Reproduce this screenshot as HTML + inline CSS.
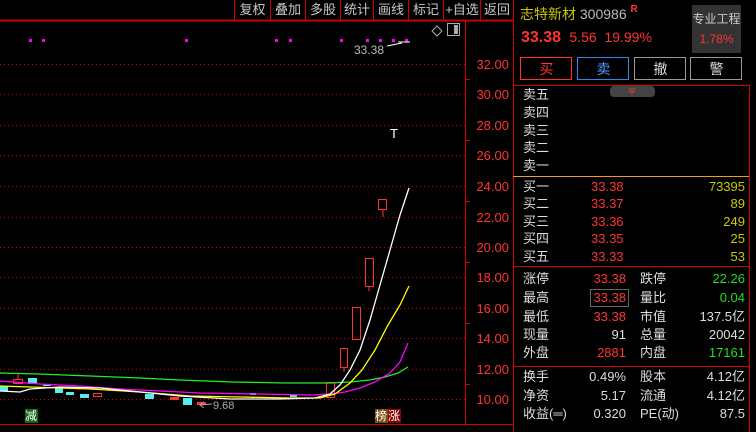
<!DOCTYPE html>
<html><head><meta charset="utf-8"><style>
body{margin:0;width:756px;height:432px;background:#000;overflow:hidden;font-family:"Liberation Sans","Noto Sans CJK SC",sans-serif;position:relative}
.a{position:absolute;white-space:nowrap}
.tb{position:absolute;top:0;height:20px;line-height:20px;font-size:13px;color:#c8c8c8;text-align:center}
.r{color:#ff3333}.y{color:#c8c800}.g{color:#22dd22}.w{color:#dddddd}.gr{color:#bbbbbb}
.row{position:absolute;left:523px;width:222px;height:18px;font-size:13px;line-height:18px;color:#dddddd}
.row span{position:absolute}
</style></head><body>
<svg class="a" style="left:0;top:0" width="756" height="432">
<g stroke="#cc0000" stroke-width="2"><line x1="0" y1="20.5" x2="513" y2="20.5"/></g>
<g stroke="#cc0000" stroke-width="1">
<line x1="234.5" y1="0" x2="234.5" y2="20"/><line x1="270.5" y1="0" x2="270.5" y2="20"/><line x1="305.5" y1="0" x2="305.5" y2="20"/><line x1="340.5" y1="0" x2="340.5" y2="20"/><line x1="373.5" y1="0" x2="373.5" y2="20"/><line x1="408.5" y1="0" x2="408.5" y2="20"/><line x1="443.5" y1="0" x2="443.5" y2="20"/><line x1="480.5" y1="0" x2="480.5" y2="20"/>
<line x1="465.5" y1="21" x2="465.5" y2="424"/>
<line x1="513.5" y1="0" x2="513.5" y2="432"/>
<line x1="749.5" y1="85" x2="749.5" y2="432"/>
<line x1="0" y1="424.5" x2="513" y2="424.5"/>
<line x1="513" y1="85.5" x2="749" y2="85.5"/>
<line x1="513" y1="266.5" x2="749" y2="266.5"/>
<line x1="513" y1="366.5" x2="749" y2="366.5"/>
</g>
<line x1="513" y1="176.5" x2="749" y2="176.5" stroke="#e8a020"/>
<g stroke="#cc0000" stroke-dasharray="1,3">
<line x1="0" y1="64.5" x2="465" y2="64.5"/><line x1="0" y1="94.5" x2="465" y2="94.5"/><line x1="0" y1="125.5" x2="465" y2="125.5"/><line x1="0" y1="155.5" x2="465" y2="155.5"/><line x1="0" y1="186.5" x2="465" y2="186.5"/><line x1="0" y1="217.5" x2="465" y2="217.5"/><line x1="0" y1="247.5" x2="465" y2="247.5"/><line x1="0" y1="277.5" x2="465" y2="277.5"/><line x1="0" y1="308.5" x2="465" y2="308.5"/><line x1="0" y1="338.5" x2="465" y2="338.5"/><line x1="0" y1="369.5" x2="465" y2="369.5"/><line x1="0" y1="399.5" x2="465" y2="399.5"/>
</g>
<g fill="#cc0000">
<rect x="466" y="79" width="4" height="1"/><rect x="466" y="140" width="4" height="1"/><rect x="466" y="201" width="4" height="1"/><rect x="466" y="262" width="4" height="1"/><rect x="466" y="323" width="4" height="1"/><rect x="466" y="384" width="4" height="1"/>
</g>
<g font-size="13" fill="#ff3333" text-anchor="end" font-family="Liberation Sans">
<text x="509" y="69">32.00</text><text x="509" y="99">30.00</text><text x="509" y="130">28.00</text><text x="509" y="160">26.00</text><text x="509" y="191">24.00</text><text x="509" y="222">22.00</text><text x="509" y="252">20.00</text><text x="509" y="282">18.00</text><text x="509" y="313">16.00</text><text x="509" y="343">14.00</text><text x="509" y="374">12.00</text><text x="509" y="404">10.00</text>
</g>
<g fill="#ff00ff"><rect x="29" y="39" width="3" height="3"/><rect x="42" y="39" width="3" height="3"/><rect x="185" y="39" width="3" height="3"/><rect x="275" y="39" width="3" height="3"/><rect x="289" y="39" width="3" height="3"/><rect x="340" y="39" width="3" height="3"/><rect x="366" y="39" width="3" height="3"/><rect x="379" y="39" width="3" height="3"/><rect x="392" y="39" width="3" height="3"/><rect x="405" y="39" width="3" height="3"/></g>
<text x="354" y="54" font-size="12" fill="#bbbbbb">33.38</text>
<path d="M387 46 L402 43 M398 42 L410 42" stroke="#fff" fill="none"/>
<path d="M437 26 L442 31 L437 36 L432 31 Z" stroke="#aaa" fill="none"/>
<rect x="447.5" y="23.5" width="12" height="12" stroke="#aaa" fill="none"/><rect x="454" y="25" width="4" height="9" fill="#aaa"/>
<text x="390" y="138" font-size="13" fill="#fff">T</text>
<g fill="#55eeee">
<rect x="0" y="386" width="8" height="5"/><rect x="28" y="378" width="9" height="6"/><rect x="43" y="384" width="8" height="2"/><rect x="55" y="388" width="8" height="5"/><rect x="66" y="392" width="8" height="3"/><rect x="80" y="394" width="9" height="4"/><rect x="145" y="394" width="9" height="5"/><rect x="183" y="398" width="9" height="7"/><rect x="290" y="395" width="7" height="2"/><rect x="250" y="393" width="6" height="2"/>
</g>
<g fill="none" stroke="#ff3333">
<rect x="13.5" y="379.5" width="9" height="4"/><line x1="18" y1="374" x2="18" y2="379"/>
<rect x="93.5" y="393.5" width="8" height="3"/>
<rect x="326.5" y="382.5" width="8" height="15"/>
<rect x="340.5" y="348.5" width="7" height="19"/><line x1="344" y1="367" x2="344" y2="372"/>
<rect x="352.5" y="307.5" width="8" height="32"/>
<rect x="365.5" y="258.5" width="8" height="28"/><line x1="369" y1="286" x2="369" y2="291"/>
<rect x="378.5" y="199.5" width="8" height="10"/><line x1="383" y1="209" x2="383" y2="217"/>
</g>
<g fill="#ff3333"><rect x="170" y="397" width="9" height="3"/><rect x="197" y="402" width="9" height="3"/></g>
<g fill="none" stroke-width="1.3">
<polyline stroke="#22ee22" points="0,373 38,374 64,375 90,376 115,377 140,378 180,380 233,382 285,383 330,383 350,382 370,380 385,377 398,373 408,367"/>
<polyline stroke="#ff00ff" points="0,381 40,384 80,386 120,389 160,391 200,393 260,394 310,395 330,394 345,392 360,388 375,382 390,373 400,362 408,343"/>
<polyline stroke="#ffff00" points="0,386 30,387 90,389 140,392 190,396 240,397 290,398 320,398 335,394 350,383 362,370 375,350 388,325 400,305 409,286"/>
<polyline stroke="#ffffff" points="0,391 20,392 30,389 60,387 100,388 140,392 180,396 230,399 280,399 315,398 330,394 340,385 350,370 360,350 370,320 380,285 390,250 400,215 409,188"/>
</g>
<path d="M200 405 L212 404 M204 402 L200 405 L204 408" stroke="#aaa" fill="none"/>
<text x="213" y="409" font-size="11" fill="#aaaaaa">9.68</text>
<rect x="610" y="86" width="45" height="11" rx="4" fill="#444"/>
<path d="M629 88 L632 90 L635 88 M629 91 L632 93 L635 91" stroke="#ff3333" fill="none"/>
<rect x="692" y="5" width="49" height="48" fill="#333"/>
<rect x="520.5" y="57.5" width="51" height="22" fill="none" stroke="#ff3333"/>
<rect x="577.5" y="57.5" width="51" height="22" fill="none" stroke="#2a8ae8"/>
<rect x="634.5" y="57.5" width="51" height="22" fill="none" stroke="#999"/>
<rect x="690.5" y="57.5" width="51" height="22" fill="none" stroke="#999"/>
<rect x="590.5" y="289.5" width="38" height="17" fill="none" stroke="#666"/>
</svg>
<div class="tb" style="left:235px;width:35px">复权</div><div class="tb" style="left:271px;width:34px">叠加</div><div class="tb" style="left:306px;width:34px">多股</div><div class="tb" style="left:341px;width:32px">统计</div><div class="tb" style="left:374px;width:34px">画线</div><div class="tb" style="left:409px;width:34px">标记</div><div class="tb" style="left:444px;width:36px">+自选</div><div class="tb" style="left:481px;width:32px">返回</div>
<div class="a" style="left:25px;top:409px;width:13px;height:14px;background:#116611;color:#fff;font-size:12px;line-height:14px">减</div>
<div class="a" style="left:375px;top:409px;width:13px;height:14px;background:#7a4a10;color:#fff;font-size:12px;line-height:14px">榜</div><div class="a" style="left:388px;top:409px;width:13px;height:14px;background:#880000;color:#fff;font-size:12px;line-height:14px">涨</div>
<div class="a" style="left:520px;top:4px;font-size:14px"><span class="y">志特新材</span> <span class="gr">300986</span> <b class="r" style="font-size:10px;vertical-align:top">R</b></div>
<div class="a" style="left:692px;top:10px;width:49px;text-align:center;font-size:12px;color:#ccc">专业工程</div>
<div class="a r" style="left:692px;top:32px;width:49px;text-align:center;font-size:12px">1.78%</div>
<div class="a r" style="left:521px;top:29px;font-size:16px"><b>33.38</b> <span style="font-size:14px">&nbsp;5.56 &nbsp;19.99%</span></div>
<div class="a r" style="left:521px;top:58px;width:51px;text-align:center;font-size:14px;line-height:22px">买</div>
<div class="a" style="left:578px;top:58px;width:51px;text-align:center;font-size:14px;line-height:22px;color:#4aa0ff">卖</div>
<div class="a w" style="left:635px;top:58px;width:51px;text-align:center;font-size:14px;line-height:22px">撤</div>
<div class="a w" style="left:691px;top:58px;width:51px;text-align:center;font-size:14px;line-height:22px">警</div>
<div class="row" style="top:86px">卖五</div><div class="row" style="top:104px">卖四</div><div class="row" style="top:122px">卖三</div><div class="row" style="top:139px">卖二</div><div class="row" style="top:157px">卖一</div>
<div class="row" style="top:178px">买一<span class="r" style="left:68px">33.38</span><span class="y" style="right:0">73395</span></div>
<div class="row" style="top:195px">买二<span class="r" style="left:68px">33.37</span><span class="y" style="right:0">89</span></div>
<div class="row" style="top:213px">买三<span class="r" style="left:68px">33.36</span><span class="y" style="right:0">249</span></div>
<div class="row" style="top:230px">买四<span class="r" style="left:68px">33.35</span><span class="y" style="right:0">25</span></div>
<div class="row" style="top:248px">买五<span class="r" style="left:68px">33.33</span><span class="y" style="right:0">53</span></div>
<div class="row" style="top:270px">涨停<span class="r" style="right:119px">33.38</span><span style="left:117px">跌停</span><span class="g" style="right:0">22.26</span></div>
<div class="row" style="top:289px">最高<span class="r" style="right:119px">33.38</span><span style="left:117px">量比</span><span class="g" style="right:0">0.04</span></div>
<div class="row" style="top:308px">最低<span class="r" style="right:119px">33.38</span><span style="left:117px">市值</span><span style="right:0">137.5亿</span></div>
<div class="row" style="top:326px">现量<span style="right:119px">91</span><span style="left:117px">总量</span><span style="right:0">20042</span></div>
<div class="row" style="top:344px">外盘<span class="r" style="right:119px">2881</span><span style="left:117px">内盘</span><span class="g" style="right:0">17161</span></div>
<div class="row" style="top:368px">换手<span style="right:119px">0.49%</span><span style="left:117px">股本</span><span style="right:0">4.12亿</span></div>
<div class="row" style="top:387px">净资<span style="right:119px">5.17</span><span style="left:117px">流通</span><span style="right:0">4.12亿</span></div>
<div class="row" style="top:405px">收益(═)<span style="right:119px">0.320</span><span style="left:117px">PE(动)</span><span style="right:0">87.5</span></div>
</body></html>
